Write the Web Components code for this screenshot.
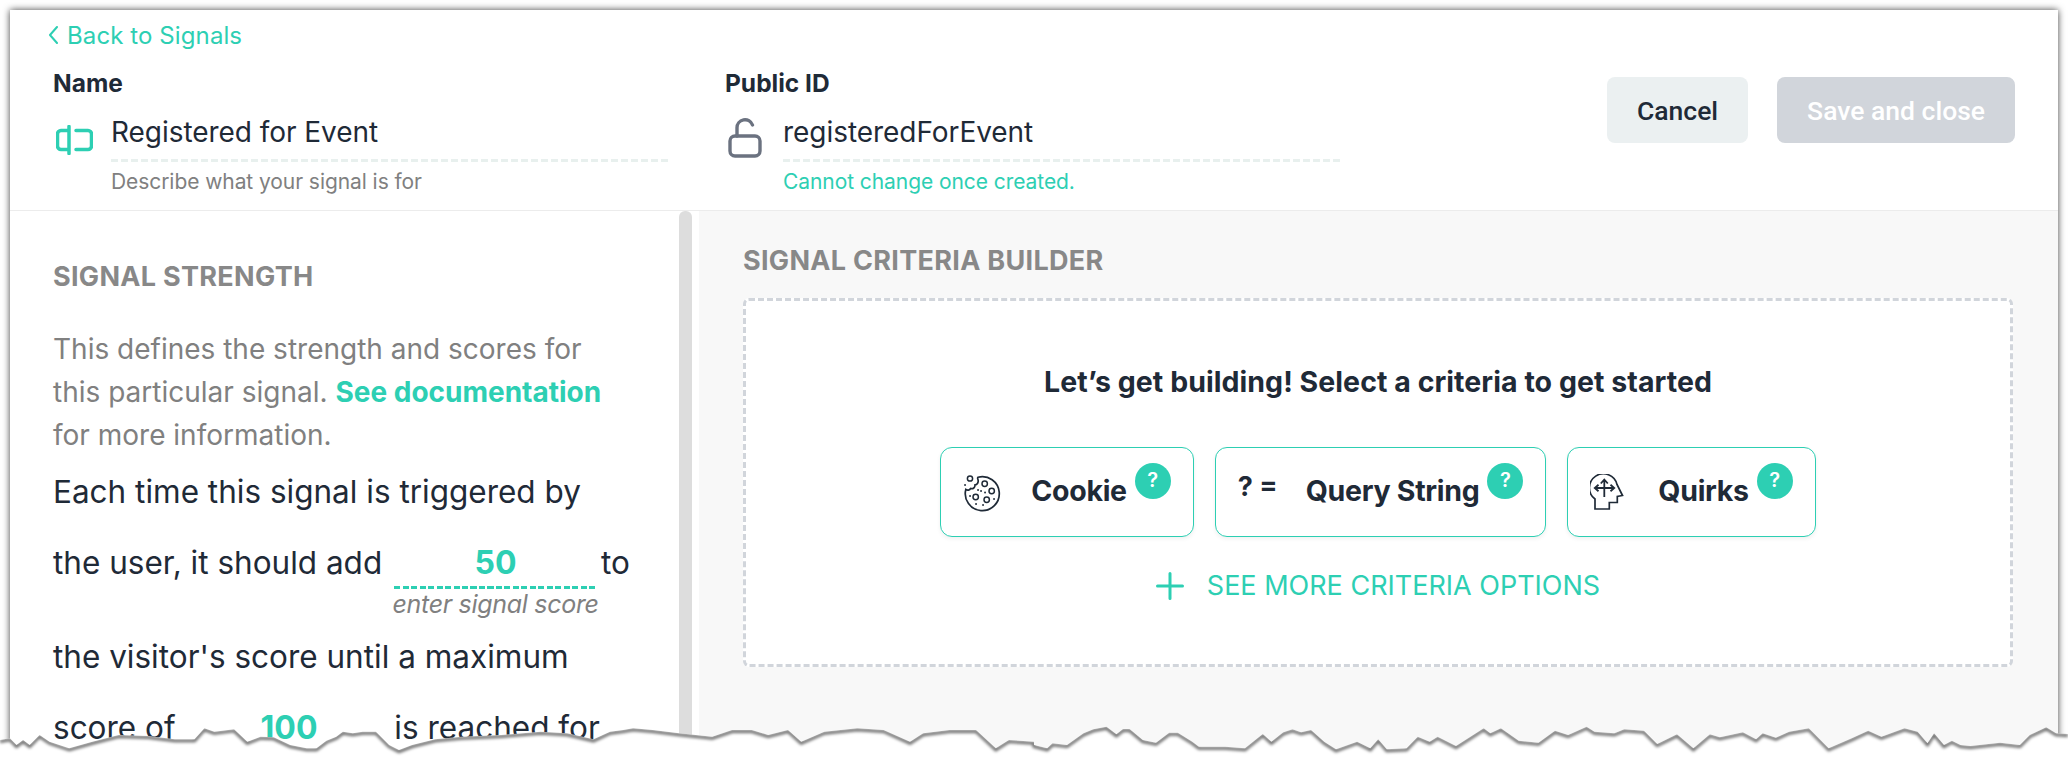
<!DOCTYPE html>
<html lang="en">
<head>
    <meta charset="UTF-8">
    <title>Signal editor</title>
    <style>
        html,body{
            margin:0;
            height:760px;
            overflow:hidden;
            background:#fff;
            font-family:Inter,"Liberation Sans",sans-serif;
            color:#1f2a37;
        }
    </style>
</head>
<body>
    <signal-editor>
        <signal-header slot="header">
            <back-link slot="back">Back to Signals</back-link>
            <signal-field slot="fields" label="Name" value="Registered for Event" hint="Describe what your signal is for">
                <svg slot="icon" style="margin-top:12px" width="37" height="30" viewBox="0 0 37 30" fill="none" stroke="#2dcfb3" stroke-width="3.500" stroke-linecap="round">
                    <path d="M13 1.500V28.500M13 5.500H5a3.500 3.500 0 0 0-3.500 3.500v12a3.500 3.500 0 0 0 3.500 3.500h8M20 5.500h12a3.500 3.500 0 0 1 3.500 3.500v12a3.500 3.500 0 0 1-3.500 3.500H20"/>
                </svg>
            </signal-field>
            <signal-field slot="fields" label="Public ID" value="registeredForEvent" hint="Cannot change once created." accent>
                <svg slot="icon" style="margin-top:5px" width="34" height="40" viewBox="0 0 34 40" fill="none" stroke="#6b7280" stroke-width="3.400" stroke-linecap="round">
                    <rect x="2" y="18" width="30" height="20" rx="5"/>
                    <path d="M9 18V10a8 8 0 0 1 15.500-3"/>
                </svg>
            </signal-field>
            <action-button slot="actions">Cancel</action-button>
            <action-button slot="actions" disabled>Save and close</action-button>
        </signal-header>
        <strength-panel slot="left">
            <score-input slot="score" value="50" hint="enter signal score"></score-input>
            <score-input slot="maximum" value="100"></score-input>
        </strength-panel>
        <criteria-panel slot="right">
            <criteria-card name="Cookie">
                <svg slot="icon" width="38" height="38" viewBox="0 0 38 38" fill="none" stroke="#1f2a37" stroke-width="1.500" stroke-linecap="round">
                    <path d="M15 3.200A17 17 0 1 1 2.800 15.500c1.800 1.200 4 .6 4.800-1 2.400.8 4.600-1 4.400-3.600 2.200-.2 3.800-2.600 3-5.200-.4-.8-.6-1.600 0-2.500z" stroke-width="1.700"/>
                    <circle cx="7" cy="4.500" r="2.600"/>
                    <circle cx="21.700" cy="9.700" r="2.700"/>
                    <circle cx="28.700" cy="17" r="2.700"/>
                    <circle cx="23.700" cy="25.700" r="2.700"/>
                    <circle cx="12.700" cy="23" r="2.700"/>
                    <path d="M2 11h.1M18 17h.1M22 18.500h.1M7 22h.1M20 31h.1M31 25h.1M13 30h.1M15 16h.1" stroke-width="1.800"/>
                </svg>
            </criteria-card>
            <criteria-card name="Query String"><span slot="icon" class="query">? =</span></criteria-card>
            <criteria-card name="Quirks">
                <svg slot="icon" width="34" height="37" viewBox="0 0 34 37" fill="none" stroke="#1f2a37" stroke-width="1.700">
                    <path d="M5 35V25A14 14 0 1 1 27 10.500L32.500 21.500L27.300 22.500V28.500H19.300V35Z"/>
                    <path d="M14.300 23V6M10.800 9.500L14.300 5.500L17.800 9.500M5 14H24M8.500 10.800L4.800 14L8.500 17.200M20.500 10.800L24.200 14L20.500 17.200" stroke-width="1.800"/>
                </svg>
            </criteria-card>
        </criteria-panel>
    </signal-editor>
    <torn-edge></torn-edge>
</body>
<script>
    class SignalEditor extends HTMLElement{
        constructor(){
            super();
            const shadow = this.attachShadow({mode:'open'});
            shadow.innerHTML = `
                <style>
                    :host{
                        display:flex;
                        flex-direction:column;
                        margin:10px 10px 0 10px;
                        height:750px;
                        overflow:hidden;
                        background:#fff;
                        box-shadow:0 0 7px rgba(0,0,0,.75);
                    }
                    .body{
                        display:flex;
                        flex:1;
                        min-height:0;
                    }
                </style>
                <slot name="header"></slot>
                <div class="body">
                    <slot name="left"></slot>
                    <slot name="right"></slot>
                </div>
            `;
        }
    }

    class SignalHeader extends HTMLElement{
        constructor(){
            super();
            const shadow = this.attachShadow({mode:'open'});
            shadow.innerHTML = `
                <style>
                    :host{
                        display:block;
                        height:201px;
                        flex:none;
                        box-sizing:border-box;
                        padding:10px 43px 0 38px;
                        border-bottom:1px solid #ececec;
                    }
                    .row{
                        display:flex;
                        justify-content:space-between;
                        padding-left:5px;
                        margin-top:18px;
                    }
                    .fields{
                        display:flex;
                        gap:57px;
                    }
                    .actions{
                        display:flex;
                        gap:29px;
                        padding-top:9px;
                    }
                </style>
                <slot name="back"></slot>
                <div class="row">
                    <div class="fields"><slot name="fields"></slot></div>
                    <div class="actions"><slot name="actions"></slot></div>
                </div>
            `;
        }
    }

    class BackLink extends HTMLElement{
        constructor(){
            super();
            const shadow = this.attachShadow({mode:'open'});
            shadow.innerHTML = `
                <style>
                    :host{
                        display:flex;
                        align-items:center;
                        gap:9px;
                        height:30px;
                        color:#2dcfb3;
                        font-size:24px;
                        letter-spacing:.1px;
                    }
                </style>
                <svg width="10" height="18" viewBox="0 0 10 18" fill="none" stroke="#2dcfb3" stroke-width="2" stroke-linecap="round" stroke-linejoin="round">
                    <path d="M9 1L2 9L9 17"/>
                </svg>
                <slot></slot>
            `;
        }
    }

    class SignalField extends HTMLElement{
        constructor(){
            super();
            const shadow = this.attachShadow({mode:'open'});
            shadow.innerHTML = `
                <style>
                    :host{
                        display:block;
                        width:615px;
                    }
                    .label{
                        font-size:24.500px;
                        font-weight:700;
                        line-height:30px;
                    }
                    .row{
                        display:flex;
                        margin-top:15px;
                    }
                    .icon{
                        width:58px;
                        flex:none;
                        padding-left:3px;
                        box-sizing:border-box;
                    }
                    .main{
                        flex:1;
                    }
                    .value{
                        font-size:28px;
                        line-height:38px;
                        height:46px;
                        letter-spacing:-.05px;
                    }
                    .dash{
                        height:3px;
                        background:repeating-linear-gradient(90deg,#e8f0ee 0 7px,transparent 7px 10px);
                    }
                    .hint{
                        margin-top:6px;
                        font-size:21px;
                        line-height:28px;
                        color:#808080;
                        letter-spacing:-.07px;
                    }
                    :host([accent]) .hint{
                        color:#2dcfb3;
                    }
                </style>
                <div class="label"></div>
                <div class="row">
                    <div class="icon"><slot name="icon"></slot></div>
                    <div class="main">
                        <div class="value"></div>
                        <div class="dash"></div>
                        <div class="hint"></div>
                    </div>
                </div>
            `;
            shadow.querySelector('.label').textContent = this.getAttribute('label');
            shadow.querySelector('.value').textContent = this.getAttribute('value');
            shadow.querySelector('.hint').textContent = this.getAttribute('hint');
        }
    }

    class ActionButton extends HTMLElement{
        constructor(){
            super();
            const shadow = this.attachShadow({mode:'open'});
            shadow.innerHTML = `
                <style>
                    :host{
                        display:flex;
                        align-items:center;
                        height:66px;
                        box-sizing:border-box;
                        padding:0 30px;
                        border-radius:8px;
                        background:#ebf0f1;
                        font-family:Roboto,sans-serif;
                        font-weight:500;
                        font-size:26.500px;
                        color:#1f2a37;
                    }
                    :host([disabled]){
                        background:#d1d5db;
                        color:#fff;
                    }
                </style>
                <slot></slot>
            `;
        }
    }

    class StrengthPanel extends HTMLElement{
        constructor(){
            super();
            const shadow = this.attachShadow({mode:'open'});
            shadow.innerHTML = `
                <style>
                    :host{
                        display:block;
                        position:relative;
                        width:689px;
                        flex:none;
                        box-sizing:border-box;
                        padding:48px 0 0 43px;
                        overflow:hidden;
                    }
                    h2{
                        margin:0;
                        font-size:27px;
                        line-height:36px;
                        font-weight:700;
                        color:#888;
                        letter-spacing:.3px;
                    }
                    .intro{
                        margin-top:33px;
                        font-size:28px;
                        line-height:43px;
                        color:#808080;
                    }
                    .intro b{
                        color:#2dcfb3;
                    }
                    .rule{
                        margin-top:-1px;
                        font-size:31.500px;
                        line-height:71px;
                        white-space:nowrap;
                    }
                    .bar{
                        position:absolute;
                        left:669px;
                        top:0;
                        bottom:0;
                        width:13px;
                        background:#ddd;
                        border-radius:6px 6px 0 0;
                    }
                </style>
                <h2>SIGNAL STRENGTH</h2>
                <div class="intro">
                    <div>This defines the strength and scores for</div>
                    <div><span>this particular signal.</span> <b>See documentation</b></div>
                    <div>for more information.</div>
                </div>
                <div class="rule">
                    <div>Each time this signal is triggered by</div>
                    <div><span>the user, it should add</span> <slot name="score"></slot> <span>to</span></div>
                    <div>the visitor's score until a maximum</div>
                    <div><span>score of</span> <slot name="maximum"></slot> <span>is reached for</span></div>
                </div>
                <div class="bar"></div>
            `;
        }
    }

    class ScoreInput extends HTMLElement{
        constructor(){
            super();
            const shadow = this.attachShadow({mode:'open'});
            shadow.innerHTML = `
                <style>
                    :host{
                        display:inline-flex;
                        flex-direction:column;
                        align-items:center;
                        width:203px;
                        margin:0 -5px 0 3px;
                        text-align:center;
                    }
                    .value{
                        width:100%;
                        height:38px;
                        line-height:38px;
                        padding-bottom:4px;
                        font-weight:700;
                        font-size:32px;
                        color:#2dcfb3;
                    }
                    .dash{
                        width:100%;
                        height:3px;
                        background:repeating-linear-gradient(90deg,#2dcfb3 0 6px,transparent 6px 8.500px);
                    }
                    .hint{
                        height:32px;
                        line-height:30px;
                        font-size:25px;
                        font-style:italic;
                        white-space:nowrap;
                        color:#808080;
                        letter-spacing:-.3px;
                    }
                </style>
                <div class="value"></div>
                <div class="dash"></div>
                <div class="hint"></div>
            `;
            shadow.querySelector('.value').textContent = this.getAttribute('value');
            shadow.querySelector('.hint').textContent = this.getAttribute('hint') || '';
        }
    }

    class CriteriaPanel extends HTMLElement{
        constructor(){
            super();
            const shadow = this.attachShadow({mode:'open'});
            shadow.innerHTML = `
                <style>
                    :host{
                        display:block;
                        flex:1;
                        box-sizing:border-box;
                        padding:32px 45px 0 44px;
                        background:#f8f8f8;
                    }
                    h2{
                        margin:0;
                        font-size:27px;
                        line-height:36px;
                        font-weight:700;
                        color:#888;
                        letter-spacing:.3px;
                    }
                    .box{
                        display:flex;
                        flex-direction:column;
                        align-items:center;
                        height:369px;
                        box-sizing:border-box;
                        margin-top:19px;
                        padding-top:61px;
                        background:#fff;
                        border:3px dashed #d1d5db;
                        border-radius:6px;
                    }
                    .title{
                        font-size:28.500px;
                        line-height:40px;
                        font-weight:700;
                        letter-spacing:.05px;
                    }
                    .cards{
                        display:flex;
                        gap:21px;
                        margin-top:45px;
                    }
                    .more{
                        display:flex;
                        align-items:center;
                        gap:23px;
                        margin-top:29px;
                        font-size:27px;
                        line-height:40px;
                        color:#2dcfb3;
                    }
                </style>
                <h2>SIGNAL CRITERIA BUILDER</h2>
                <div class="box">
                    <div class="title">Let’s get building! Select a criteria to get started</div>
                    <div class="cards"><slot></slot></div>
                    <div class="more">
                        <svg width="28" height="28" viewBox="0 0 28 28" stroke="#2dcfb3" stroke-width="3" stroke-linecap="round">
                            <path d="M14 1.500V26.500M1.500 14H26.500"/>
                        </svg>
                        SEE MORE CRITERIA OPTIONS
                    </div>
                </div>
            `;
        }
    }

    class CriteriaCard extends HTMLElement{
        constructor(){
            super();
            const shadow = this.attachShadow({mode:'open'});
            shadow.innerHTML = `
                <style>
                    :host{
                        display:flex;
                        align-items:flex-start;
                        height:90px;
                        box-sizing:border-box;
                        padding:15px 22px 0 22px;
                        background:#fff;
                        border:1.500px solid #2dcfb3;
                        border-radius:12px;
                        box-shadow:0 2px 4px rgba(0,0,0,.06);
                    }
                    .icon{
                        width:68px;
                        padding-top:11px;
                        flex:none;
                        box-sizing:border-box;
                    }
                    ::slotted(.query){
                        display:block;
                        margin-top:-7px;
                        font-size:27px;
                        line-height:40px;
                        font-weight:700;
                        white-space:pre;
                    }
                    .name{
                        font-size:28.500px;
                        font-weight:700;
                        line-height:56px;
                        letter-spacing:-.3px;
                    }
                    .help{
                        display:flex;
                        align-items:center;
                        justify-content:center;
                        width:36px;
                        height:34px;
                        padding-bottom:2px;
                        margin-left:8px;
                        border-radius:50%;
                        background:#2dcfb3;
                        color:#fff;
                        font-size:20px;
                        font-weight:600;
                    }
                </style>
                <div class="icon"><slot name="icon"></slot></div>
                <div class="name"></div>
                <div class="help">?</div>
            `;
            shadow.querySelector('.name').textContent = this.getAttribute('name');
        }
    }

    // points read off the reference, [x, y]
    const tearLeft = [[15,115],[25,135],[35,120],[45,135],[60,105],[75,125],[105,145],[140,125],[180,105],[225,108],[265,118],[295,118],[310,85],[325,95],[355,88],[375,125],[395,110],[415,112],[440,135],[465,145],[480,145],[495,122],[510,110],[520,95],[535,100],[550,95],[570,95],[590,135],[605,150],[625,135],[660,118],[700,110],[760,105],[820,95],[860,100],[900,118],[925,95],[945,90],[960,85],[990,90],[1030,100],[1080,110],[1110,90],[1140,90],[1165,105],[1195,90],[1215,125],[1250,95],[1300,85],[1340,90],[1380,125],[1400,100],[1440,90],[1480,90],[1510,145],[1530,120],[1568,125]];
    const tearRight = [[0,135],[20,145],[28,130],[50,135],[75,100],[90,88],[110,80],[125,103],[135,87],[145,87],[165,120],[185,128],[205,98],[218,98],[240,125],[250,140],[290,140],[320,145],[347,102],[360,125],[378,97],[392,88],[405,97],[420,90],[440,125],[458,148],[490,125],[510,145],[522,118],[535,148],[565,145],[582,110],[600,125],[612,110],[640,138],[682,85],[692,100],[708,85],[735,122],[765,128],[790,92],[810,105],[838,80],[850,95],[880,100],[895,88],[925,92],[945,132],[975,103],[1000,145],[1025,103],[1040,112],[1075,97],[1095,118],[1105,100],[1125,113],[1145,95],[1175,85],[1205,145],[1240,115],[1265,92],[1285,110],[1320,85],[1340,95],[1355,130],[1365,100],[1380,135],[1392,122],[1405,135],[1420,138],[1465,128],[1495,135],[1510,105],[1535,82],[1550,100]];

    class TornEdge extends HTMLElement{
        constructor(){
            super();
            const shadow = this.attachShadow({mode:'open'});
            const scale = 1034/1568;
            const left = tearLeft.map(p=>[p[0]*scale, 700+p[1]/3]);
            const right = tearRight.map(p=>[1034+p[0]*scale, 700+p[1]/3]);
            const pts = left.concat(right).map(p=>p[0].toFixed(1)+','+p[1].toFixed(1));
            const line = '0,740 '+pts.join(' ')+' 2068,734';
            shadow.innerHTML = `
                <style>
                    :host{
                        position:absolute;
                        left:0;
                        top:0;
                        width:2068px;
                        height:760px;
                        pointer-events:none;
                    }
                    svg{
                        display:block;
                    }
                </style>
                <svg width="2068" height="760" viewBox="0 0 2068 760">
                    <defs>
                        <clipPath id="below"><polygon points="${line} 2068,760 0,760"/></clipPath>
                        <filter id="soft" x="-1%" y="-100%" width="102%" height="300%"><feGaussianBlur stdDeviation="1.6"/></filter>
                    </defs>
                    <polygon points="${line} 2068,760 0,760" fill="#fff"/>
                    <g clip-path="url(#below)">
                        <polyline points="${line}" fill="none" stroke="#000" stroke-opacity=".6" stroke-width="3" transform="translate(0,1.500)" filter="url(#soft)"/>
                    </g>
                </svg>
            `;
        }
    }

    customElements.define('signal-editor',SignalEditor);
    customElements.define('signal-header',SignalHeader);
    customElements.define('back-link',BackLink);
    customElements.define('signal-field',SignalField);
    customElements.define('action-button',ActionButton);
    customElements.define('strength-panel',StrengthPanel);
    customElements.define('score-input',ScoreInput);
    customElements.define('criteria-panel',CriteriaPanel);
    customElements.define('criteria-card',CriteriaCard);
    customElements.define('torn-edge',TornEdge);
</script>
</html>
